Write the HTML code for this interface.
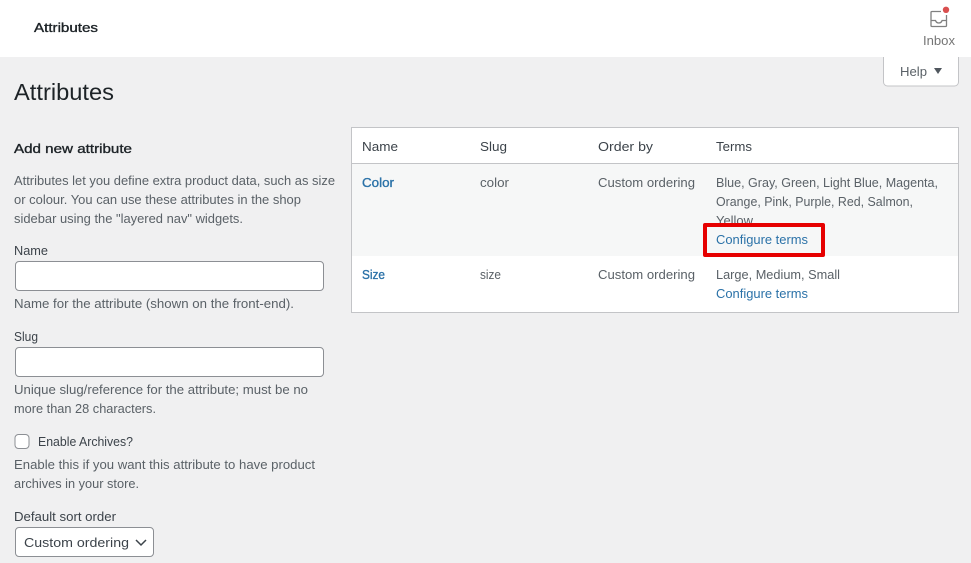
<!DOCTYPE html>
<html lang="en">
<head>
<meta charset="utf-8">
<title>Attributes</title>
<style>
html,body{margin:0;padding:0;width:971px;height:563px;overflow:hidden;background:#f0f0f1}
svg{display:block}
text{font-family:"Liberation Sans",sans-serif;font-size:13px;fill:#5a6167}
.l{fill:#3c434a}
.a{fill:#2b72a8}
.b{stroke-width:.35px}
.a.b{stroke:#2b72a8}
.d{fill:#1d2327;stroke:#1d2327}
</style>
</head>
<body>
<svg width="971" height="563" viewBox="0 0 971 563" xmlns="http://www.w3.org/2000/svg">
<rect width="971" height="563" fill="#f0f0f1"/>
<!-- top bar -->
<rect width="971" height="57" fill="#fff"/>
<text x="34" y="32" textLength="64" lengthAdjust="spacingAndGlyphs" class="b d">Attributes</text>
<!-- inbox -->
<path d="M941 11.500H932a1 1 0 0 0-1 1V25.500a1 1 0 0 0 1 1H945.500a1 1 0 0 0 1-1V15" fill="none" stroke="#808080" stroke-width="1.300"/>
<path d="M931 20.500H935.500c.6 1.800 1.700 2.500 3.300 2.500s2.700-.7 3.300-2.500H946.500" fill="none" stroke="#808080" stroke-width="1.300"/>
<circle cx="946" cy="9.800" r="3.200" fill="#d94f4f"/>
<text x="923" y="45" textLength="32" lengthAdjust="spacingAndGlyphs" style="fill:#757575">Inbox</text>
<!-- help tab -->
<path d="M883.500 57V82a4 4 0 0 0 4 4H954.500a4 4 0 0 0 4-4V57" fill="#fff" stroke="#c3c4c7"/>
<text x="900" y="76" textLength="27" lengthAdjust="spacingAndGlyphs">Help</text>
<path d="M934 68H942L938 74Z" fill="#50575e"/>
<!-- title -->
<text x="14" y="100" textLength="100" lengthAdjust="spacingAndGlyphs" style="font-size:23px;fill:#1d2327">Attributes</text>
<!-- form -->
<text x="14" y="153" textLength="118" lengthAdjust="spacingAndGlyphs" class="b d">Add new attribute</text>
<text x="14" y="185" textLength="321" lengthAdjust="spacingAndGlyphs">Attributes let you define extra product data, such as size</text>
<text x="14" y="204" textLength="287" lengthAdjust="spacingAndGlyphs">or colour. You can use these attributes in the shop</text>
<text x="14" y="223" textLength="229" lengthAdjust="spacingAndGlyphs">sidebar using the "layered nav" widgets.</text>
<text x="14" y="255" textLength="34" lengthAdjust="spacingAndGlyphs" class="l">Name</text>
<rect x="15.500" y="261.500" width="308" height="29" rx="3.500" fill="#fff" stroke="#8c8f94"/>
<text x="14" y="308" textLength="280" lengthAdjust="spacingAndGlyphs">Name for the attribute (shown on the front-end).</text>
<text x="14" y="341" textLength="24" lengthAdjust="spacingAndGlyphs" class="l">Slug</text>
<rect x="15.500" y="347.500" width="308" height="29" rx="3.500" fill="#fff" stroke="#8c8f94"/>
<text x="14" y="394" textLength="294" lengthAdjust="spacingAndGlyphs">Unique slug/reference for the attribute; must be no</text>
<text x="14" y="413" textLength="142" lengthAdjust="spacingAndGlyphs">more than 28 characters.</text>
<rect x="15" y="434.500" width="14" height="14" rx="3.500" fill="#fff" stroke="#8c8f94"/>
<text x="38" y="446" textLength="95" lengthAdjust="spacingAndGlyphs" class="l">Enable Archives?</text>
<text x="14" y="469" textLength="301" lengthAdjust="spacingAndGlyphs">Enable this if you want this attribute to have product</text>
<text x="14" y="488" textLength="125" lengthAdjust="spacingAndGlyphs">archives in your store.</text>
<text x="14" y="521" textLength="102" lengthAdjust="spacingAndGlyphs" class="l">Default sort order</text>
<rect x="15.500" y="527.500" width="138" height="29" rx="3.500" fill="#fff" stroke="#8c8f94"/>
<text x="24" y="547" textLength="105" lengthAdjust="spacingAndGlyphs" class="l">Custom ordering</text>
<path d="M136 540L141 545L146 540" fill="none" stroke="#3c434a" stroke-width="1.500"/>
<!-- table -->
<rect x="351.500" y="127.500" width="607" height="185" fill="#fff" stroke="#c3c4c7"/>
<rect x="352" y="164" width="606" height="92" fill="#f6f7f7"/>
<path d="M352 163.500H958" stroke="#c3c4c7"/>
<text x="362" y="151" textLength="36" lengthAdjust="spacingAndGlyphs" class="l">Name</text>
<text x="480" y="151" textLength="27" lengthAdjust="spacingAndGlyphs" class="l">Slug</text>
<text x="598" y="151" textLength="55" lengthAdjust="spacingAndGlyphs" class="l">Order by</text>
<text x="716" y="151" textLength="36" lengthAdjust="spacingAndGlyphs" class="l">Terms</text>
<text x="362" y="187" textLength="32" lengthAdjust="spacingAndGlyphs" class="a b">Color</text>
<text x="480" y="187" textLength="29" lengthAdjust="spacingAndGlyphs">color</text>
<text x="598" y="187" textLength="97" lengthAdjust="spacingAndGlyphs">Custom ordering</text>
<text x="716" y="187" textLength="222" lengthAdjust="spacingAndGlyphs">Blue, Gray, Green, Light Blue, Magenta,</text>
<text x="716" y="206" textLength="197" lengthAdjust="spacingAndGlyphs">Orange, Pink, Purple, Red, Salmon,</text>
<text x="716" y="225" textLength="37" lengthAdjust="spacingAndGlyphs">Yellow</text>
<rect x="705" y="225" width="118" height="30" fill="#f6f7f7" stroke="#e60000" stroke-width="4" stroke-linejoin="round"/>
<text x="716" y="244" textLength="92" lengthAdjust="spacingAndGlyphs" class="a">Configure terms</text>
<text x="362" y="279" textLength="23" lengthAdjust="spacingAndGlyphs" class="a b">Size</text>
<text x="480" y="279" textLength="21" lengthAdjust="spacingAndGlyphs">size</text>
<text x="598" y="279" textLength="97" lengthAdjust="spacingAndGlyphs">Custom ordering</text>
<text x="716" y="279" textLength="124" lengthAdjust="spacingAndGlyphs">Large, Medium, Small</text>
<text x="716" y="298" textLength="92" lengthAdjust="spacingAndGlyphs" class="a">Configure terms</text>
</svg>
</body>
</html>
